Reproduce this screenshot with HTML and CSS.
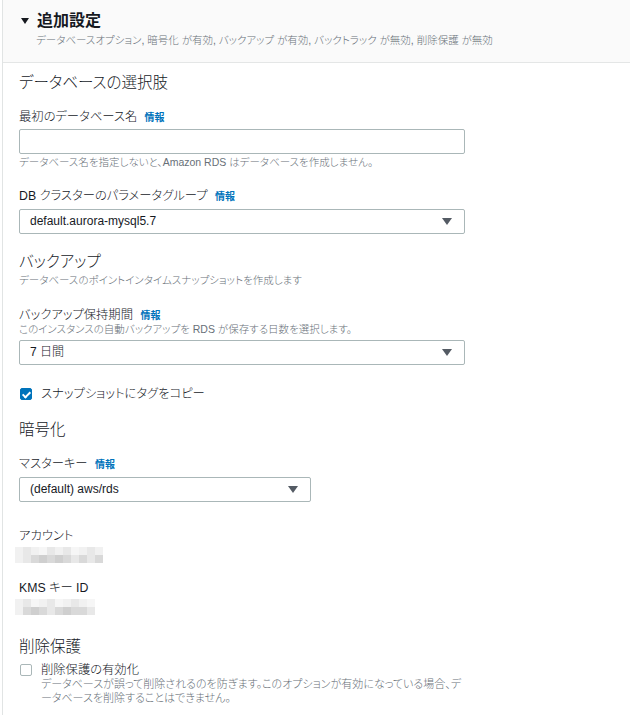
FILE: index.html
```html
<!DOCTYPE html>
<html lang="ja">
<head>
    <meta charset="UTF-8">
    <meta name="viewport" content="width=device-width, initial-scale=1.0">
    <title>追加設定</title>
    <link rel="stylesheet" href="styles.css">
</head>
<body>

    <div class="panel">
        <div class="panel-header">
            <h2><span class="caret"></span>追加設定</h2>
            <p class="summary">データベースオプション, 暗号化 が有効, バックアップ が有効, バックトラック が無効, 削除保護 が無効</p>
        </div>

        <div class="panel-body">
            <h3 class="section-title first">データベースの選択肢</h3>

            <div class="field">
                <label class="field-label">最初のデータベース名 <a class="info">情報</a></label>
                <input type="text" class="text-input">
                <p class="hint">データベース名を指定しないと、Amazon RDS はデータベースを作成しません。</p>
            </div>

            <div class="field">
                <label class="field-label">DB クラスターのパラメータグループ <a class="info">情報</a></label>
                <div class="select">default.aurora-mysql5.7<span class="arrow"></span></div>
            </div>

            <h3 class="section-title backup">バックアップ</h3>
            <p class="section-desc">データベースのポイントインタイムスナップショットを作成します</p>

            <div class="field period">
                <label class="field-label">バックアップ保持期間 <a class="info">情報</a></label>
                <p class="hint sub">このインスタンスの自動バックアップを RDS が保存する日数を選択します。</p>
                <div class="select">7 日間<span class="arrow"></span></div>
            </div>

            <div class="check-row">
                <span class="checkbox checked"></span>
                <span class="check-label">スナップショットにタグをコピー</span>
            </div>

            <h3 class="section-title">暗号化</h3>

            <div class="field">
                <label class="field-label">マスターキー <a class="info">情報</a></label>
                <div class="select short">(default) aws/rds<span class="arrow"></span></div>
            </div>

            <div class="readonly">
                <div class="ro-label">アカウント</div>
                <div class="masked wide">
                    <div class="m-row"><i class="c1"></i><i class="c2"></i><i class="c1"></i><i class="c3"></i><i class="c2"></i><i class="c1"></i><i class="c2"></i><i class="c3"></i><i class="c1"></i><i class="c2"></i><i class="c1"></i></div>
                    <div class="m-row"><i class="c1"></i><i class="c2"></i><i class="c4"></i><i class="c5"></i><i class="c4"></i><i class="c5"></i><i class="c4"></i><i class="c2"></i><i class="c4"></i><i class="c2"></i><i class="c4"></i></div>
                </div>
            </div>

            <div class="readonly">
                <div class="ro-label">KMS キー ID</div>
                <div class="masked">
                    <div class="m-row"><i class="c1"></i><i class="c2"></i><i class="c3"></i><i class="c1"></i><i class="c2"></i><i class="c3"></i><i class="c1"></i><i class="c2"></i><i class="c1"></i><i class="c3"></i></div>
                    <div class="m-row"><i class="c1"></i><i class="c4"></i><i class="c5"></i><i class="c4"></i><i class="c2"></i><i class="c4"></i><i class="c5"></i><i class="c4"></i><i class="c4"></i><i class="c2"></i></div>
                </div>
            </div>

            <h3 class="section-title">削除保護</h3>
            <div class="check-row top">
                <span class="checkbox"></span>
                <div>
                    <div class="check-label">削除保護の有効化</div>
                    <p class="check-desc">データベースが誤って削除されるのを防ぎます。このオプションが有効になっている場合、データベースを削除することはできません。</p>
                </div>
            </div>
        </div>
    </div>

</body>
</html>
```

FILE: styles.css
```css
body {
    margin: 0;
    background: #fff;
    color: #16191f;
    font-family: "Liberation Sans", "Noto Sans CJK JP", sans-serif;
    font-weight: 300;
    font-feature-settings: "palt";
}
.panel {
    margin-left: 2px;
    border-left: 1px solid #e1e4e4;
    min-height: 715px;
}
.panel-header {
    background: #fafafa;
    border-bottom: 1px solid #e4e6e6;
    padding: 10px 16px 15px 17px;
}
.panel-header h2 {
    margin: 0;
    font-size: 16px;
    line-height: 22px;
    font-weight: bold;
    display: flex;
    align-items: center;
}
.caret {
    width: 0;
    height: 0;
    border-left: 4px solid transparent;
    border-right: 4px solid transparent;
    border-top: 6px solid #16191f;
    margin: 0 8px 0 1px;
}
.summary {
    margin: 1px 0 0 16px;
    font-size: 10.5px;
    line-height: 14px;
    color: #687078;
}
.panel-body {
    padding: 0 16px;
}
.section-title {
    margin: 19px 0 0;
    font-size: 15.5px;
    line-height: 20px;
    font-weight: 300;
}
.section-title.first {
    margin-top: 10px;
}
.section-title.backup {
    margin-top: 18px;
}
.check-row + .section-title {
    margin-top: 18px;
}
.section-desc {
    margin: 1px 0 0;
    font-size: 10.5px;
    line-height: 14px;
    color: #687078;
}
.field {
    margin-top: 16px;
}
.field + .field {
    margin-top: 19px;
}
.field.period {
    margin-top: 20px;
}
.field-label {
    display: block;
    font-size: 12.3px;
    line-height: 16px;
}
.info {
    color: #0073bb;
    font-size: 10px;
    font-weight: bold;
    margin-left: 4px;
}
.text-input {
    display: block;
    box-sizing: border-box;
    width: 446px;
    height: 25px;
    margin: 3px 0 0;
    border: 1px solid #aab7b8;
    border-radius: 2px;
    background: #fff;
}
.hint {
    margin: 1px 0 0;
    font-size: 10.5px;
    line-height: 14px;
    color: #687078;
}
.hint.sub {
    margin: -2px 0 4px;
}
.select {
    box-sizing: border-box;
    width: 446px;
    height: 25px;
    margin-top: 4px;
    border: 1px solid #aab7b8;
    border-radius: 2px;
    padding: 0 10px;
    font-size: 12px;
    line-height: 23px;
    display: flex;
    justify-content: space-between;
    align-items: center;
}
.hint.sub + .select {
    margin-top: 0;
}
.select.short {
    width: 292px;
}
.arrow {
    width: 0;
    height: 0;
    border-left: 5px solid transparent;
    border-right: 5px solid transparent;
    border-top: 7px solid #545b64;
    margin-right: 2px;
}
.check-row {
    display: flex;
    align-items: center;
    margin-top: 21px;
}
.check-row.top {
    align-items: flex-start;
    margin-top: 6px;
}
.checkbox {
    box-sizing: border-box;
    width: 12px;
    height: 12px;
    border: 1px solid #aab7b8;
    border-radius: 2px;
    margin: 0 9px 0 1px;
    flex-shrink: 0;
    position: relative;
}
.check-row.top .checkbox {
    margin-top: 1px;
}
.checkbox.checked {
    background: #0073bb;
    border-color: #0073bb;
}
.checkbox.checked::after {
    content: "";
    position: absolute;
    left: 3px;
    top: 1px;
    width: 3px;
    height: 6px;
    border-right: 2px solid #fff;
    border-bottom: 2px solid #fff;
    transform: rotate(45deg);
}
.check-label {
    font-size: 12.3px;
    line-height: 16px;
}
.check-row.top .check-label {
    line-height: 14px;
}
.check-desc {
    margin: 0;
    width: 428px;
    font-size: 11px;
    line-height: 14px;
    color: #687078;
}
.readonly {
    margin-top: 26px;
}
.readonly + .readonly {
    margin-top: 17px;
}
.ro-label {
    font-size: 12.3px;
    line-height: 16px;
}
.masked {
    margin: 3px 0 0 -4px;
    width: 80px;
}
.masked.wide {
    width: 88px;
}
.m-row {
    display: flex;
    height: 8px;
}
.m-row i {
    flex: 1;
}
.m-row .c1 { background: #f1f1f1; }
.m-row .c2 { background: #e8e8e8; }
.m-row .c3 { background: #f6f6f6; }
.m-row .c4 { background: #d9d9d9; }
.m-row .c5 { background: #cfcfcf; }
.readonly + .section-title {
    margin-top: 22px;
}
```
